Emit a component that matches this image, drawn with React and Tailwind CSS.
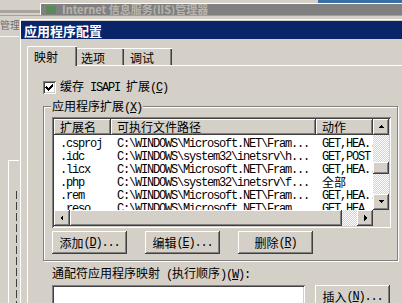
import React from 'react';

const raised =
  'bg-[#d4d0c8] shadow-[inset_-1px_-1px_#404040,inset_1px_1px_#fff,inset_-2px_-2px_#808080]';
const sunken =
  'shadow-[inset_1px_1px_#808080,inset_-1px_-1px_#fff,inset_2px_2px_#404040,inset_-2px_-2px_#d4d0c8]';
const dither =
  'bg-[repeating-conic-gradient(#d4d0c8_0_25%,#fff_0_50%)] bg-[length:2px_2px]';
const cjk = "font-['Noto_Sans_CJK_SC',sans-serif]";

// half-width latin text, SimSun-like 6px advance
function L({ children }) {
  return (
    <span className="font-['Liberation_Mono',monospace] text-[12px] tracking-[-1.2px]">
      {children}
    </span>
  );
}

function Acc({ before, k, after = '' }) {
  return (
    <>
      {before}
      <L>
        (<u className="underline underline-offset-[1px]">{k}</u>){after}
      </L>
    </>
  );
}

function Arrow({ dir }) {
  const pts = {
    up: '4,2 1,5 7,5',
    down: '1,2 7,2 4,5',
    left: '5,1 5,7 2,4',
    right: '3,1 3,7 6,4',
  }[dir];
  return (
    <div className={`${raised} w-[16px] h-[16px] shrink-0 flex items-center justify-center`}>
      <svg width="8" height="8" viewBox="0 0 8 8" shapeRendering="crispEdges">
        <polygon points={pts} fill="#000" />
      </svg>
    </div>
  );
}

function Button({ children, w = 'w-[75px]' }) {
  return (
    <div
      className={`${raised} ${w} h-[23px] flex items-center justify-center text-[12px] text-black leading-none`}
    >
      {children}
    </div>
  );
}

const rows = [
  ['.csproj', 'C:\\WINDOWS\\Microsoft.NET\\Fram...', 'GET,HEA..'],
  ['.idc', 'C:\\WINDOWS\\system32\\inetsrv\\h...', 'GET,POST'],
  ['.licx', 'C:\\WINDOWS\\Microsoft.NET\\Fram...', 'GET,HEA..'],
  ['.php', 'C:\\WINDOWS\\system32\\inetsrv\\f...', '全部'],
  ['.rem', 'C:\\WINDOWS\\Microsoft.NET\\Fram...', 'GET,HEA..'],
  ['.reso', 'C:\\WINDOWS\\Microsoft.NET\\Fram...', 'GET,HEA..'],
];

function ListView() {
  const cols = ['w-[57px]', 'w-[205px]', 'w-[57px]'];
  return (
    <div className={`ml-[8px] mt-[10px] w-[339px] h-[111px] p-[2px] bg-white ${sunken}`}>
      <div className="flex h-full">
        <div className="flex flex-col w-[319px]">
          <div className="flex-1 overflow-hidden">
            <div className="flex h-[16px]">
              {['扩展名', '可执行文件路径', '动作'].map((h, i) => (
                <div
                  key={h}
                  className={`${raised} ${cols[i]} shrink-0 pl-[6px] flex items-center text-[12px] leading-none`}
                >
                  {h}
                </div>
              ))}
            </div>
            <div className="pt-[1px]">
              {rows.map((r) => (
                <div key={r[0]} className="flex h-[13px] items-center">
                  {r.map((c, i) => (
                    <div
                      key={i}
                      className={`${cols[i]} shrink-0 pl-[6px] whitespace-nowrap overflow-hidden text-[12px] leading-none`}
                    >
                      {/[\u4e00-\u9fff]/.test(c) ? c : <L>{c}</L>}
                    </div>
                  ))}
                </div>
              ))}
            </div>
          </div>
          <div className="flex h-[16px]">
            <Arrow dir="left" />
            <div className={`${raised} w-[272px] h-[16px]`} />
            <div className={`${dither} flex-1`} />
            <Arrow dir="right" />
          </div>
        </div>
        <div className="flex flex-col w-[16px]">
          <Arrow dir="up" />
          <div className={`${dither} h-[59px] pt-[27px]`}>
            <div className={`${raised} h-[12px]`} />
          </div>
          <Arrow dir="down" />
          <div className="h-[16px] bg-[#d4d0c8]" />
        </div>
      </div>
    </div>
  );
}

export default function App() {
  return (
    <div className={`relative w-[402px] h-[303px] overflow-hidden bg-[#d4d0c8] text-black ${cjk}`}>
      {/* windows behind the dialog */}
      <div className="absolute right-0 top-0 w-[84px] h-[3px] bg-[#3a6ea5]" />
      <div className="absolute left-[40px] top-[3px] right-0 h-[12px] border-t border-l border-white bg-[#808080] flex items-center gap-[6px] pl-[5px]">
        <div className="w-[10px] h-[8px] bg-[#5a8a5a]" />
        <span className="text-[11px] leading-none font-bold text-[#b8b4ac] whitespace-nowrap">
          Internet 信息服务(IIS)管理器
        </span>
      </div>
      <div className="absolute left-0 top-[15px] right-0 h-[1px] bg-[#a0a0a0]" />
      <div className="absolute left-0 top-[10px] w-[40px] h-[3px] bg-[#a8a49c]" />
      <div className="absolute left-0 top-[20px] text-[10px] leading-none text-[#6a6a6a]">管理.</div>
      <div className="absolute left-0 top-[36px] w-[19px] h-[1px] bg-[#f4f4f4]" />
      <div className="absolute left-[8px] top-[160px] w-[11px] h-[150px] border-t border-l border-white">
        <div className="ml-[7px] mt-[30px] w-[1px] h-[120px] bg-[repeating-linear-gradient(#404040_0_8px,transparent_8px_11px)]" />
      </div>

      {/* dialog */}
      <div className="absolute left-[19px] top-[18px] w-[400px] h-[300px] pl-[2px] pt-[3px] shadow-[inset_1px_1px_#d4d0c8,inset_2px_2px_#fff] bg-[#d4d0c8]">
        <div className="h-[18px] bg-[#0a246a] flex items-center pl-[3px]">
          <span className="text-white font-bold text-[13px] leading-none">应用程序配置</span>
        </div>

        {/* tabs */}
        <div className="ml-[6px] mt-[7px] flex items-end h-[19px] text-[12px] leading-none">
          <div className="relative z-10 -mb-px w-[50px] h-[20px] bg-[#d4d0c8] border-l border-t border-white rounded-tl-[2px] shadow-[inset_-1px_0_#404040,inset_-2px_0_#808080] pl-[6px] pt-[4px]">
            映射
          </div>
          <div className="w-[47px] h-[17px] border-t border-white shadow-[inset_-1px_0_#404040,inset_-2px_0_#808080] pl-[4px] pt-[3px]">
            选项
          </div>
          <div className="w-[48px] h-[17px] border-t border-white shadow-[inset_-1px_0_#404040,inset_-2px_0_#808080] pl-[6px] pt-[3px]">
            调试
          </div>
        </div>

        {/* tab panel */}
        <div className="ml-[6px] border-t border-l border-white h-[260px] flex flex-col text-[12px] leading-none">
          <div className="ml-[15px] mt-[14px] flex items-center gap-[4px]">
            <div className={`w-[13px] h-[13px] bg-white ${sunken} flex items-center justify-center`}>
              <svg width="9" height="9" viewBox="0 0 9 9" shapeRendering="crispEdges">
                <path d="M1 3h1v1h1v1h1v-1h1v-1h1v-1h1v-1h1v3h-1v1h-1v1h-1v1h-1v1h-1v-1h-1v-1h-1v-1h-1z" fill="#000" />
              </svg>
            </div>
            <span>
              缓存<L> ISAPI </L>扩展
              <L>
                (<u>C</u>)
              </L>
            </span>
          </div>

          {/* group box */}
          <div className="relative ml-[15px] mt-[12px] w-[355px] h-[157px] border border-[#808080] shadow-[inset_1px_1px_#fff,1px_1px_#fff]">
            <div className="absolute left-[7px] -top-[7px] bg-[#d4d0c8] px-[1px]">
              <Acc before="应用程序扩展" k="X" />
            </div>
            <ListView />
            <div className="ml-[8px] mt-[3px] flex gap-[18px]">
              <Button>
                <Acc before="添加" k="D" after="..." />
              </Button>
              <Button>
                <Acc before="编辑" k="E" after="..." />
              </Button>
              <Button>
                <Acc before="删除" k="R" />
              </Button>
            </div>
          </div>

          <div className="ml-[24px] mt-[6px] h-[13px]">
            通配符应用程序映射
            <L> (</L>执行顺序<L>)</L>
            <Acc before="" k="W" after=":" />
          </div>
          <div className="ml-[24px] mt-[5px] flex gap-[10px]">
            <div className={`w-[253px] h-[40px] bg-white ${sunken}`} />
            <Button>
              <Acc before="插入" k="N" after="..." />
            </Button>
          </div>
        </div>
      </div>
    </div>
  );
}
